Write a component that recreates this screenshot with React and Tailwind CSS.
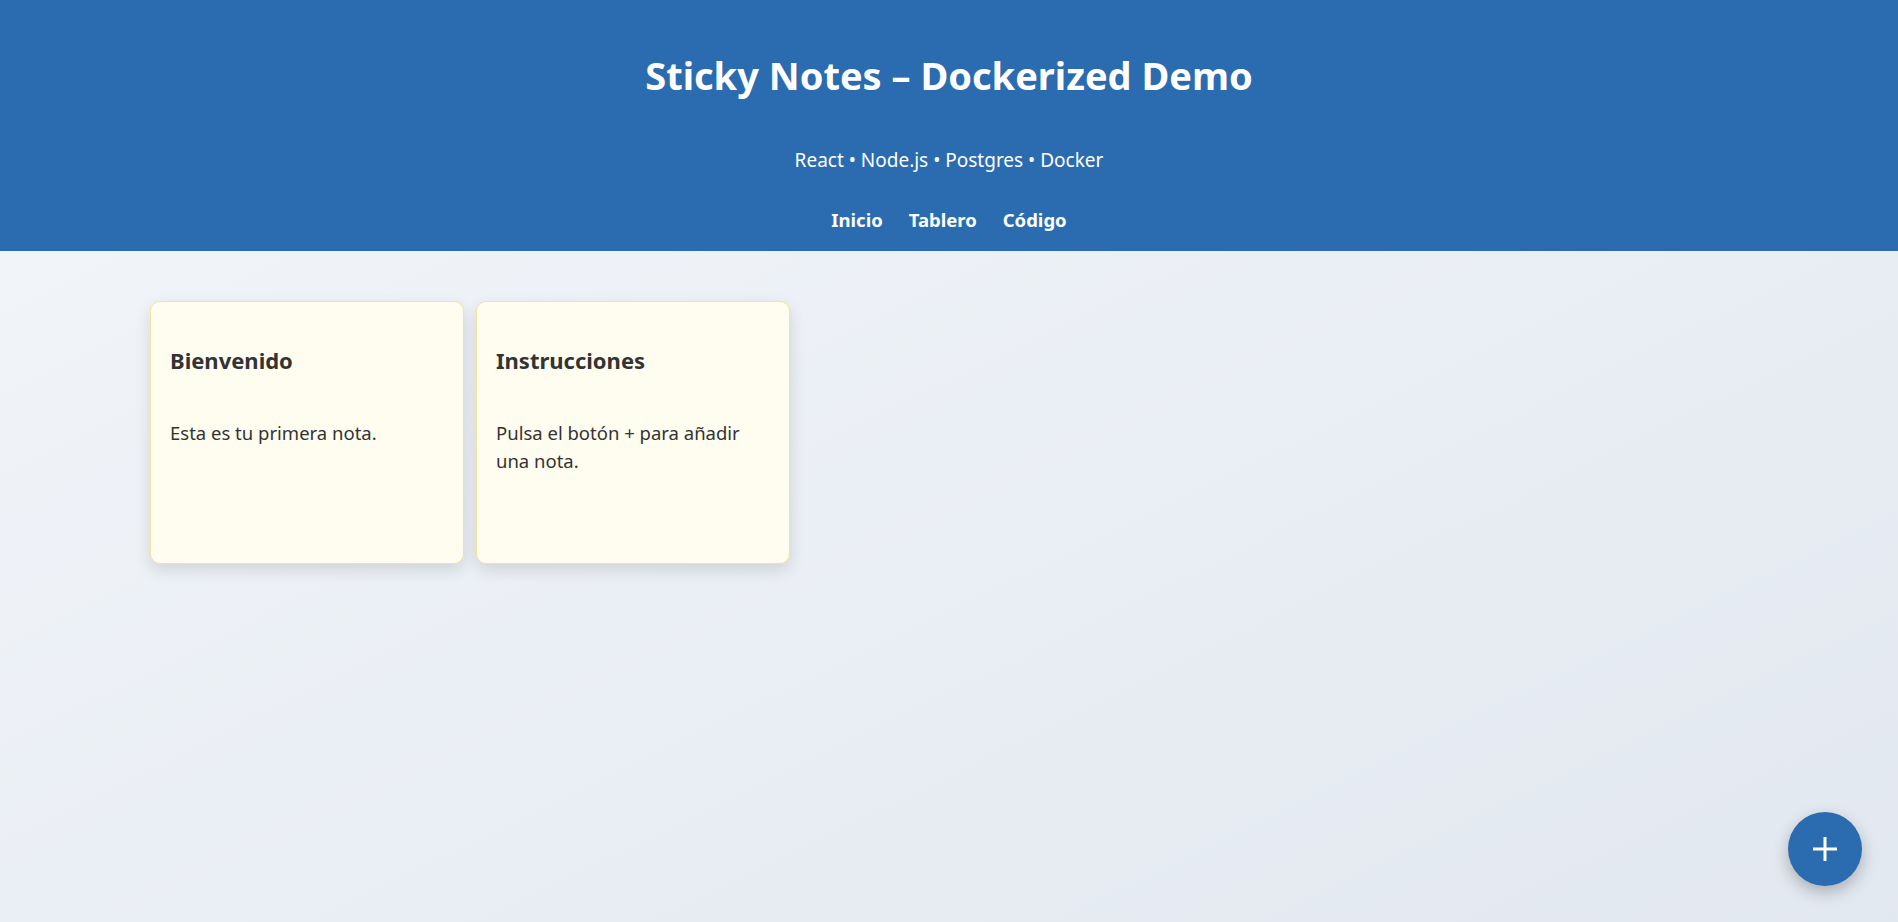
import React from 'react';

const notes = [
  { id: 1, title: 'Bienvenido', body: 'Esta es tu primera nota.' },
  { id: 2, title: 'Instrucciones', body: 'Pulsa el botón + para añadir una nota.' },
];

const App = () => {
  return (
    <div
      className="min-h-screen bg-gradient-to-br from-[#f3f6fa] to-[#e2e8f0] text-[#333]"
      style={{ fontFamily: '"Noto Sans", "Open Sans", sans-serif' }}
    >
      {/* Header */}
      <header className="bg-[#2b6cb0] text-white text-center h-[251px] flex flex-col items-center">
        <h1 className="mt-[46px] text-[38px] font-bold leading-[58px]">Sticky Notes – Dockerized Demo</h1>
        <p className="mt-[43px] text-[19px] leading-[26px]">React • Node.js • Postgres • Docker</p>
        <nav className="mt-[34px] flex gap-[26px] text-[18.5px] font-bold leading-[26px]">
          <a href="#">Inicio</a>
          <a href="#">Tablero</a>
          <a href="#">Código</a>
        </nav>
      </header>

      {/* Notes */}
      <main className="px-[150px] pt-[50px] flex gap-[12px] items-start">
        {notes.map((note) => (
          <div
            key={note.id}
            className="w-[314px] h-[263px] bg-[#fffdf0] border border-[#f3e3a0] rounded-[10px] shadow-[0_6px_16px_rgba(0,0,0,0.12)] px-[19px] pt-[43px]"
          >
            <h3 className="text-[22px] font-bold leading-[30px]">{note.title}</h3>
            <p className="mt-[44px] text-[18.5px] leading-[28px]">{note.body}</p>
          </div>
        ))}
      </main>

      {/* Add button */}
      <button className="fixed right-[36px] bottom-[36px] w-[74px] h-[74px] rounded-full bg-[#2b6cb0] shadow-[0_6px_16px_rgba(0,0,0,0.25)] flex items-center justify-center">
        <svg width="26" height="26" viewBox="0 0 26 26">
          <path d="M13 1v24M1 13h24" stroke="white" strokeWidth="3" />
        </svg>
      </button>
    </div>
  );
};

export default App;
